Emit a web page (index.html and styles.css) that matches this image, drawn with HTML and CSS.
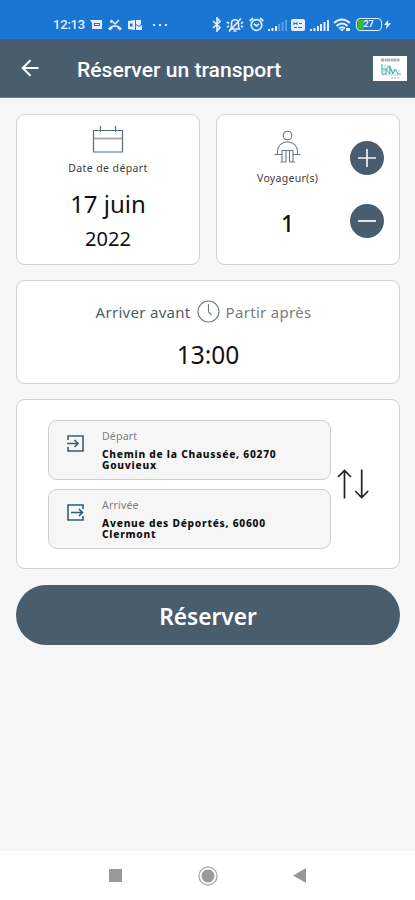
FILE: index.html
```html
<!DOCTYPE html>
<html lang="fr">
<head>
    <meta charset="UTF-8">
    <meta name="viewport" content="width=device-width, initial-scale=1">
    <title>Réserver un transport</title>
    <link rel="stylesheet" href="styles.css">
</head>
<body>

<div class="status-bar">
    <div class="status-left">
        <span class="status-time">12:13</span>
        <svg width="12" height="12" viewBox="0 0 12 12"><path fill="#e4f0ff" fill-rule="evenodd" d="M0 1h12v9H2V4zM4 4v3h6V4zM5 5h4v1H5z"/></svg>
        <svg width="14" height="12" viewBox="0 0 14 12"><path fill="none" stroke="#e4f0ff" stroke-width="1.500" d="M3 1l4 4 4-4M3 1v3"/><path fill="#e4f0ff" d="M0 9.500C4 5 10 5 14 9.500L12 11.500 9.500 9.500V8h-5v1.500L2 11.500z"/></svg>
        <svg width="14" height="12" viewBox="0 0 14 12"><path fill="#e4f0ff" fill-rule="evenodd" d="M0 2l7-1v10l-7-1zM2 4.500v3h2.500v-3zM8 1h5v4l-2 2-3-2zM8 6l3 2 3-2v5H8z"/></svg>
        <span class="status-dots"><i></i><i></i><i></i></span>
    </div>
    <div class="status-right">
        <svg width="10" height="15" viewBox="0 0 10 15"><path fill="none" stroke="#e4f0ff" stroke-width="1.600" d="M1 4l7 6.500L5 14V1l3 3.500L1 11"/></svg>
        <svg width="18" height="16" viewBox="0 0 18 16"><path fill="none" stroke="#e4f0ff" stroke-width="1.600" d="M4.500 12h9l-1-2V6.500C12.500 1.500 5.500 1.500 5.500 6.500V10zM7.500 14h3M3 14.500L15 1.500M1 5l2 1.500M1 10l2-1M17 5l-2 1.500M17 10l-2-1"/></svg>
        <svg width="15" height="15" viewBox="0 0 15 15"><g fill="none" stroke="#e4f0ff" stroke-width="1.700"><circle cx="7.500" cy="8" r="5.300"/><path d="M.7 4L4 1M14.300 4L11 1M5 7l2.500 2L10 7"/></g></svg>
        <svg width="19" height="12" viewBox="0 0 19 12"><path stroke="#e4f0ff" stroke-width="2" d="M1 12v-2M4.500 12V9M8 12V7"/><path stroke="#5b9de4" stroke-width="2" d="M11 12V5M14.500 12V3M18 12V1"/></svg>
        <svg width="14" height="12" viewBox="0 0 14 12"><rect width="14" height="12" rx="2" fill="#e4f0ff"/><path stroke="#1976d2" d="M3 3v3M3 4.500h3M6 3v3M8 4.500h3M3 8.500h3M7 8.500h4"/></svg>
        <svg width="19" height="12" viewBox="0 0 19 12"><path stroke="#e4f0ff" stroke-width="2" d="M1 12v-2M4.500 12V9M8 12V7M11 12V5M14.500 12V3M18 12V1"/></svg>
        <svg width="18" height="14" viewBox="0 0 18 14"><path fill="none" stroke="#e4f0ff" stroke-width="2" d="M1 5Q9-2 17 5M3.500 8Q9 3 14.500 8M6 10.500q3-2.500 6 0"/><path fill="#e4f0ff" d="M7 11h4l-2 2.500zM13 10h4v3h-4z"/></svg>
        <span class="battery"><span class="battery-level"></span><b>27</b></span>
        <svg class="bolt" width="7" height="11" viewBox="0 0 8 11"><path fill="#e4f0ff" d="M5 0L0 6h3l-1 5 6-7H4.500z"/></svg>
    </div>
</div>

<header class="app-bar">
    <svg class="back" width="18" height="18" viewBox="0 0 18 18"><path fill="none" stroke="#fff" stroke-width="2" d="M17.500 9H2M9.500 1.200L1.700 9l7.800 7.800"/></svg>
    <h1>Réserver un transport</h1>
    <div class="logo">
        <svg width="34" height="25" viewBox="0 0 34 25"><path stroke="#8b9296" stroke-width="3" stroke-dasharray="3 .7 2 .5" opacity=".75" d="M8 4h19"/><g fill="none" stroke="#38aaa5"><path d="M9 8v10h4v-5l4 5v-7l3 7 2-5 3 5h3M9 13h5l2-3 2 4"/><path stroke="#8dcdca" stroke-dasharray="2 1" d="M11 10h7M10 15h18M9 19h18"/></g><path stroke="#aaa" stroke-dasharray="2 1" d="M18 22h9"/></svg>
    </div>
</header>

<main class="content">
    <div class="row">
        <section class="card date-card">
            <svg width="32" height="28" viewBox="0 0 32 28"><path fill="none" stroke="#536b7d" stroke-width="1.200" d="M1.500 5.500h29V27h-29zM8.500 1v6M23.500 1v6"/><path stroke="#aaa" stroke-width="2" d="M2 13.500h28"/></svg>
            <span class="label">Date de départ</span>
            <span class="day">17 juin</span>
            <span class="year">2022</span>
        </section>
        <section class="card travellers-card">
            <div class="travellers">
                <svg width="27" height="34" viewBox="0 0 27 34"><g fill="none" stroke="#687883" stroke-width="1.100"><circle cx="13.500" cy="5.500" r="4.300"/><path d="M.5 24.500H8M19 24.500h7.500M3.500 24v-3c0-4.500 4-8.500 8-9h4c4 .5 8 4.500 8 9v3M8 32V20.500h11V32M12 21v11M15.500 21v11M6.500 32H12M15.500 32H21"/></g></svg>
                <span class="label">Voyageur(s)</span>
                <span class="count">1</span>
            </div>
            <div class="stepper">
                <button class="round-btn" aria-label="Ajouter"><svg width="18" height="18" viewBox="0 0 18 18"><path stroke="#eef3f8" stroke-width="1.700" d="M0 9h18M9 0v18"/></svg></button>
                <button class="round-btn" aria-label="Retirer"><svg width="18" height="18" viewBox="0 0 18 18"><path stroke="#dce5ed" stroke-width="2" d="M0 9h18"/></svg></button>
            </div>
        </section>
    </div>

    <section class="card time-card">
        <div class="time-choice">
            <span class="before">Arriver avant</span>
            <svg width="23" height="23" viewBox="0 0 23 23"><g fill="none" stroke="#727b80" stroke-width="1.100"><circle cx="11.500" cy="11.500" r="10.500"/><path d="M11.500 4v8l3 3"/></g></svg>
            <span class="after">Partir après</span>
        </div>
        <span class="time">13:00</span>
    </section>

    <section class="card trip-card">
        <div class="addresses">
            <div class="address">
                <svg width="17" height="17" viewBox="0 0 17 17"><path fill="none" stroke="#405b73" stroke-width="1.600" d="M1 5V1h15v15H1v-4M0 8.500h11M7.500 5l3.500 3.500L7.500 12"/></svg>
                <div>
                    <span class="address-label">Départ</span>
                    <p><span>Chemin de la Chaussée, 60270</span><span>Gouvieux</span></p>
                </div>
            </div>
            <div class="address">
                <svg width="17" height="17" viewBox="0 0 17 17"><path fill="none" stroke="#315d78" stroke-width="1.600" d="M16 5V1H1v15h15v-4M4 8.500h12M12 5l3.500 3.500L12 12"/></svg>
                <div>
                    <span class="address-label">Arrivée</span>
                    <p><span>Avenue des Déportés, 60600</span><span>Clermont</span></p>
                </div>
            </div>
        </div>
        <svg class="swap" width="33" height="30" viewBox="0 0 33 30"><path fill="none" stroke="#222" stroke-width="1.700" d="M7.500 29.500V1.500M1 8l6.500-6.500L14 8M24.700.5v28M18.200 22l6.500 6.500 6.500-6.500"/></svg>
    </section>

    <button class="book-btn">Réserver</button>
</main>

<nav class="nav-bar">
    <svg width="13" height="13" viewBox="0 0 13 13"><path fill="#999" d="M0 0h13v13H0z"/></svg>
    <svg width="20" height="20" viewBox="0 0 20 20"><circle cx="10" cy="10" r="9" fill="none" stroke="#aaa" stroke-width="1.300"/><circle cx="10" cy="10" r="6.500" fill="#999"/></svg>
    <svg width="13" height="15" viewBox="0 0 13 15"><path fill="#999" d="M13 0v15L0 7.500z"/></svg>
</nav>

</body>
</html>
```
FILE: styles.css
```css
* {
    box-sizing: border-box;
}

body {
    margin: 0;
    height: 900px;
    display: flex;
    flex-direction: column;
    background: #f6f6f6;
    font-family: "Noto Sans", sans-serif;
    color: #111;
    overflow: hidden;
}

svg {
    display: block;
    flex: none;
}

button {
    border: none;
    padding: 0;
    font-family: inherit;
}

.status-bar {
    height: 39px;
    padding: 10px 24px 0 53px;
    display: flex;
    align-items: center;
    justify-content: space-between;
    background: #1976d2;
    color: #e4f0ff;
}

.status-left, .status-right {
    display: flex;
    align-items: center;
}

.status-left {
    gap: 6px;
}

.status-right {
    gap: 4.4px;
}

.status-time {
    width: 32px;
    margin-right: -1px;
    font: 500 13px/16px Roboto, sans-serif;
    letter-spacing: -0.2px;
}

.status-dots {
    display: flex;
    gap: 4px;
    margin-left: 5px;
}

.status-dots i {
    width: 2px;
    height: 2px;
    background: #e4f0ff;
}

.battery {
    position: relative;
    width: 26px;
    height: 13px;
    border: 1.5px solid #e4f0ff;
    border-radius: 4px;
    text-align: center;
    font: 9px/11px Roboto, sans-serif;
}

.battery b {
    position: relative;
}

.battery-level {
    position: absolute;
    left: 1px;
    top: 1px;
    width: 6px;
    height: 9px;
    background: #38bd39;
}

.bolt {
    margin-left: -2px;
}

.app-bar {
    height: 59px;
    padding: 0 8px 0 21px;
    display: flex;
    align-items: center;
    background: #485d6d;
    border-bottom: 1px solid #71818c;
}

.back {
    margin-bottom: 1px;
}

.app-bar h1 {
    margin: 4px 0 0 38px;
    color: #fff;
    font: 500 21.1px/28px Roboto, sans-serif;
    white-space: nowrap;
}

.logo {
    margin-left: auto;
    background: #fff;
}

.content {
    flex: 1;
    padding: 16px 15px 0 16px;
    display: flex;
    flex-direction: column;
    gap: 15px;
}

.row {
    display: grid;
    grid-template-columns: 1fr 1fr;
    gap: 16px;
}

.card {
    background: #fff;
    border: 1.5px solid #d2d2d2;
    border-radius: 9px;
}

.date-card, .travellers-card {
    height: 151px;
}

.date-card, .travellers, .time-card {
    display: flex;
    flex-direction: column;
    align-items: center;
}

.date-card {
    padding-top: 10px;
}

.label {
    font-size: 10.5px;
    line-height: 14px;
    letter-spacing: 0.4px;
    color: #3c3c3c;
}

.date-card .label {
    margin-top: 8px;
}

.day {
    margin-top: 13px;
    font-size: 24px;
    line-height: 32px;
}

.year {
    margin-top: 5px;
    font-size: 20px;
    line-height: 28px;
}

.travellers-card {
    padding: 15px 15px 0 40px;
    display: flex;
    justify-content: space-between;
}

.travellers .label {
    margin-top: 7px;
    letter-spacing: 0.3px;
}

.count {
    margin-top: 23px;
    font-size: 23px;
    font-weight: 500;
    line-height: 30px;
}

.stepper {
    display: flex;
    flex-direction: column;
    gap: 29px;
    padding-top: 11px;
}

.round-btn {
    width: 34px;
    height: 34px;
    border-radius: 50%;
    display: grid;
    place-items: center;
    background: #485d6d;
}

.time-card {
    height: 104px;
    padding-top: 18px;
}

.time-choice {
    display: flex;
    align-items: center;
    gap: 6px;
    margin-right: 9px;
    font-size: 15px;
    line-height: 23px;
    letter-spacing: 0.3px;
}

.before {
    padding-top: 2px;
    color: #4c5e6b;
}

.after {
    padding-top: 2px;
    color: #7c7c7c;
}

.time {
    margin-top: 14px;
    font-size: 24.5px;
    line-height: 34px;
}

.trip-card {
    height: 170px;
    padding: 20px 29px 0 31px;
    display: flex;
    justify-content: space-between;
}

.addresses {
    width: 283px;
    display: flex;
    flex-direction: column;
    gap: 9px;
}

.address {
    height: 60px;
    padding: 8px 0 0 18px;
    display: flex;
    gap: 18px;
    background: #f6f6f6;
    border: 1.5px solid #cecece;
    border-radius: 9px;
}

.address svg {
    margin-top: 6px;
}

.address-label {
    display: block;
    font-size: 10.5px;
    line-height: 14px;
    letter-spacing: 0.2px;
    color: #7e7e7e;
}

.address p {
    margin: 6px 0 0;
    font-size: 10.2px;
    font-weight: 800;
    line-height: 11px;
    letter-spacing: 0.75px;
    white-space: nowrap;
}

.address p span {
    display: block;
    height: 11px;
}

.swap {
    margin-top: 49px;
}

.book-btn {
    height: 60px;
    margin-top: 1px;
    border-radius: 30px;
    background: #485d6d;
    color: #fff;
    font-size: 22.7px;
    font-weight: 600;
    line-height: 32px;
    padding-top: 3px;
}

.nav-bar {
    height: 49px;
    padding: 0 109px;
    display: flex;
    align-items: center;
    justify-content: space-between;
    background: #fff;
}
```
